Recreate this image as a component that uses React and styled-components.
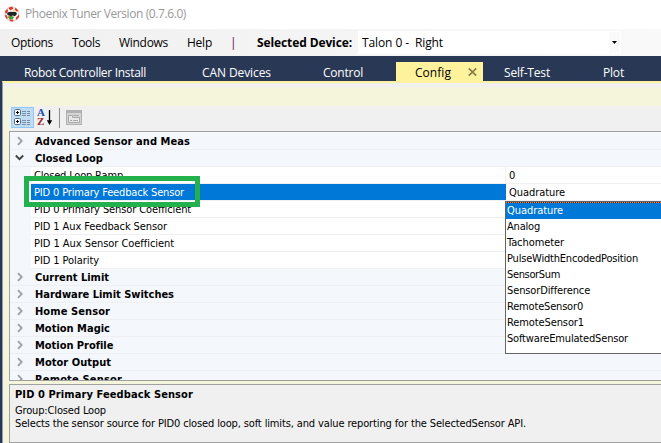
import React, { useLayoutEffect, useRef, useState } from "react";
import styled, { createGlobalStyle, css } from "styled-components";

const tahoma = '"DejaVu Sans Condensed", "DejaVu Sans", sans-serif';
const segoe = '"Open Sans", "Noto Sans", sans-serif';

const GlobalStyle = createGlobalStyle`
  * { box-sizing: border-box; }
  body { margin: 0; overflow: hidden; background: #fff; }
`;

const Text = styled.span`
  flex: none;
  white-space: pre;
  width: max-content;
`;

/* Label whose tracking is tuned so the text spans the requested width. */
function Label({ w, children }) {
  const ref = useRef(null);
  const [tracking, setTracking] = useState(0);
  useLayoutEffect(() => {
    const range = document.createRange();
    range.selectNodeContents(ref.current);
    setTracking((w - range.getBoundingClientRect().width) / children.length);
  }, [w, children]);
  return <Text ref={ref} style={{ letterSpacing: `${tracking}px` }}>{children}</Text>;
}

const Window = styled.div`
  width: 661px;
  height: 443px;
  display: flex;
  flex-direction: column;
  overflow: hidden;
  background: #293955;
  font-family: ${segoe};
  font-size: 12px;
  color: #000;
`;

const TitleBar = styled.header`
  height: 29px;
  flex: none;
  display: flex;
  align-items: center;
  gap: 5px;
  padding: 0 0 2px 4px;
  background: #fff;
  color: #999;
`;

const MenuBar = styled.nav`
  height: 27px;
  flex: none;
  display: flex;
  align-items: center;
  padding-left: 11px;
  background: linear-gradient(90deg, #f0f0f0, #f9f9f9);
`;

const MenuItem = styled.div`
  width: ${(p) => p.$span}px;
  flex: none;
  display: flex;
  font-weight: ${(p) => (p.$bold ? 700 : 400)};
  color: ${(p) => p.$tint || "#000"};
`;

const DeviceSelect = styled.div`
  width: 263px;
  height: 23px;
  display: flex;
  align-items: center;
  justify-content: space-between;
  padding: 0 1px 0 4px;
  background: #fff;
`;

const SelectArrow = styled.div`
  width: 11px;
  height: 21px;
  display: flex;
  align-items: center;
  justify-content: center;
  background: #fafafa;
`;

const TabStrip = styled.div`
  height: 25px;
  flex: none;
  display: flex;
  align-items: flex-end;
`;

const Tab = styled.div`
  width: ${(p) => p.$span}px;
  height: 19px;
  flex: none;
  display: flex;
  align-items: center;
  padding: 1px 0 0 ${(p) => p.$inset}px;
  color: #fff;
  ${(p) =>
    p.$active &&
    css`
      background: #fff29d;
      color: #000;
    `}
`;

const CloseMark = styled.svg`
  margin-left: 17px;
`;

const Page = styled.main`
  flex: 1;
  min-height: 0;
  display: flex;
  flex-direction: column;
  margin-left: 2px;
  border-top: 2px solid #fff29d;
  border-left: 1px solid #8e9bbc;
  background: #f5f5dc;
`;

const PageTop = styled.div`
  height: 4px;
  flex: none;
  background: #f0f0f0;
`;

const Editor = styled.div`
  margin: 19px 0 0 6px;
  flex: 1;
  min-height: 0;
  display: flex;
  flex-direction: column;
  font-family: ${tahoma};
  font-stretch: condensed;
  font-size: 11px;
`;

const ToolBar = styled.div`
  height: 25px;
  flex: none;
  display: flex;
  align-items: flex-start;
  padding: 1px 0 0 2px;
  background: #f0f0f0;
`;

const ToolButton = styled.div`
  width: 23px;
  height: 21px;
  display: flex;
  align-items: center;
  justify-content: center;
  border: 1px solid ${(p) => (p.$on ? "#90c8f6" : "transparent")};
  background: ${(p) => (p.$on ? "#c0dcf3" : "transparent")};
`;

const Divider = styled.div`
  width: 1px;
  height: 20px;
  margin: 1px 2px 0 4px;
  background: #8d8d8d;
`;

const Grid = styled.section`
  position: relative;
  height: 250px;
  flex: none;
  padding-top: 1px;
  border: 1px solid #a0a0a0;
  border-right: 0;
  background: #f4f7fc;
`;

const Rows = styled.div`
  height: 247px;
  overflow: hidden;
`;

const Category = styled.div`
  height: 17px;
  display: flex;
  align-items: center;
  border-bottom: 1px solid #edeff1;
  font-weight: 700;
`;

const Expander = styled.div`
  width: 25px;
  height: 16px;
  display: flex;
  align-items: center;
  padding-left: 5px;
`;

const Property = styled.div`
  height: 17px;
  display: flex;
  margin-left: 21px;
  border-bottom: 1px solid #f0f0f0;
  background: #fff;
`;

const PropertyName = styled.div`
  width: 475px;
  flex: none;
  display: flex;
  align-items: center;
  padding-left: 3px;
  border-right: 1px solid #f0f0f0;
  ${(p) =>
    p.$selected &&
    css`
      border-color: #0078d7;
      background: #0078d7;
      color: #fff;
    `}
`;

const PropertyValue = styled.div`
  display: flex;
  align-items: center;
  padding-left: 3px;
`;

const Highlight = styled.div`
  position: absolute;
  left: 14px;
  top: 44px;
  width: 176px;
  height: 31px;
  border: 5px solid #22b14c;
`;

const Options = styled.div`
  position: absolute;
  left: 495px;
  top: 69px;
  width: 170px;
  height: 153px;
  border: 1px solid #646464;
  background: #fff;
`;

const DottedEdge = styled.div`
  height: 1px;
  background: repeating-linear-gradient(90deg, #ff8728 0 1px, #40291a 1px 2px);
`;

const Option = styled.div`
  height: 16px;
  display: flex;
  align-items: center;
  padding: 0 0 2px 1px;
  background: ${(p) => (p.$selected ? "#0078d7" : "#fff")};
  color: ${(p) => (p.$selected ? "#fff" : "#000")};
`;

const HelpPane = styled.section`
  height: 59px;
  flex: none;
  margin-top: 3px;
  padding: 3px 0 0 5px;
  border: 1px solid #a0a0a0;
  border-right: 0;
  background: #f0f0f0;
  line-height: 13px;
`;

const HelpTitle = styled.div`
  display: flex;
  height: 16px;
  font-weight: 700;
`;

const HelpLine = styled.div`
  display: flex;
  height: 13px;
`;

const AppIcon = () => (
  <svg width="16" height="16" viewBox="0 0 16 16">
    <circle cx="8" cy="8" r="7" fill="#fff" stroke="#cfc6c2" strokeWidth="1" />
    <path d="M4.5 1.8 8 .5l1.5 2.2L6 4.5ZM11.5 1.8l3 3-1.6 1-2.4-2.4ZM.8 5.5 3.4 3l.8 2L2 8ZM.6 9.5 2.6 9l1.4 3-1.3 1ZM5.5 13.3l4 .4-.4 1.9-3-.3ZM11.5 12 15 8.5l.2 2.5-2.6 3Z" fill="#e5352f" />
    <path d="M3 6.8 6 5.8l6 .2 1 2-2 2.3-2.2-.8-2.2.8L3.5 9Z" fill="#222" />
    <path d="M3.8 10.6 6.6 9.8l3.6 1-1.4 2.4-3.4.2Z" fill="#4f9a35" />
    <path d="M8.8 3.5l3 2.2-3-.2Z" fill="#f2c654" />
  </svg>
);

const CategorizedIcon = () => (
  <svg width="17" height="17" viewBox="0 0 17 17" fill="none">
    {[1, 10].map((y) => (
      <g key={y}>
        <rect x=".5" y={y - 0.5} width="6" height="6" rx="1.2" fill="#fff" stroke="#4d6b8b" />
        <path d={`M2 ${y + 2.5}h3M3.5 ${y + 1}v3`} stroke="#000" />
        <path d={`M8 ${y + 1.5}h4M8 ${y + 3.5}h4M8 ${y + 5.5}h4M13 ${y + 1.5}h3M13 ${y + 3.5}h3M13 ${y + 5.5}h3`} stroke="#788ea5" />
      </g>
    ))}
  </svg>
);

const AlphaWrap = styled.div`
  width: 21px;
  height: 20px;
  display: flex;
  align-items: center;
  padding-left: 3px;
`;

const AlphaLetters = styled.div`
  width: 9px;
  font: 700 11px/9px "Liberation Serif", serif;
  color: #1b4dab;
`;

const AlphaLast = styled.div`
  color: #9c2828;
`;

const SortIcon = () => (
  <AlphaWrap>
    <AlphaLetters>
      A<AlphaLast>Z</AlphaLast>
    </AlphaLetters>
    <svg width="7" height="17" viewBox="0 0 7 17">
      <path d="M3.5 1v12" stroke="#000" strokeWidth="1.3" />
      <path d="M.8 11.3h5.4L3.5 16Z" fill="#000" />
    </svg>
  </AlphaWrap>
);

const PagesIcon = () => (
  <svg width="16" height="15" viewBox="0 0 16 15" fill="none">
    <rect x=".5" y=".5" width="15" height="14" fill="#d4d4d4" stroke="#b1b1b1" />
    <path d="M1 2h14" stroke="#b1b1b1" strokeWidth="2" />
    <path d="M2.5 12.5v-7h4v2h7v5Z" fill="#e9e9e9" stroke="#a8a8a8" />
    <path d="M7.5 5.5h5M4 10.5h2M7 10.5h5" stroke="#a8a8a8" />
  </svg>
);

const Chevron = ({ open }) => (
  <svg width="10" height="10" viewBox="0 0 10 10" fill="none">
    {open ? (
      <path d="M.8 2.5 4.5 6.2 8.2 2.5" stroke="#404040" strokeWidth="1.8" />
    ) : (
      <path d="M3 1.2 6.7 5 3 8.8" stroke="#a0a0a0" strokeWidth="1.8" />
    )}
  </svg>
);

const menu = [
  { text: "Options", w: 42, span: 61 },
  { text: "Tools", w: 28, span: 47 },
  { text: "Windows", w: 49, span: 68 },
  { text: "Help", w: 25, span: 43 },
  { text: "|", w: 4, span: 27, tint: "#561045" },
  { text: "Selected Device:", w: 95, span: 101, bold: true },
];

const tabs = [
  { text: "Robot Controller Install", w: 122, span: 174, inset: 24 },
  { text: "CAN Devices", w: 69, span: 121, inset: 28 },
  { text: "Control", w: 40, span: 101, inset: 28 },
  { text: "Config", w: 36, span: 87, inset: 19, active: true },
  { text: "Self-Test", w: 46, span: 96, inset: 21 },
  { text: "Plot", w: 21, span: 60, inset: 24 },
];

const rows = [
  { category: "Advanced Sensor and Meas", w: 155 },
  { category: "Closed Loop", w: 68, open: true },
  { name: "Closed Loop Ramp", w: 89, value: "0", vw: 6 },
  { name: "PID 0 Primary Feedback Sensor", w: 150, value: "Quadrature", vw: 56, selected: true },
  { name: "PID 0 Primary Sensor Coefficient", w: 157 },
  { name: "PID 1 Aux Feedback Sensor", w: 133 },
  { name: "PID 1 Aux Sensor Coefficient", w: 140 },
  { name: "PID 1 Polarity", w: 65 },
  { category: "Current Limit", w: 74 },
  { category: "Hardware Limit Switches", w: 139 },
  { category: "Home Sensor", w: 75 },
  { category: "Motion Magic", w: 75 },
  { category: "Motion Profile", w: 78 },
  { category: "Motor Output", w: 76 },
  { category: "Remote Sensor", w: 87 },
];

const options = [
  ["Quadrature", 56],
  ["Analog", 33],
  ["Tachometer", 57],
  ["PulseWidthEncodedPosition", 131],
  ["SensorSum", 53],
  ["SensorDifference", 83],
  ["RemoteSensor0", 76],
  ["RemoteSensor1", 77],
  ["SoftwareEmulatedSensor", 121],
];

export default function App() {
  return (
    <Window>
      <GlobalStyle />
      <TitleBar>
        <AppIcon />
        <Label w={161}>Phoenix Tuner Version (0.7.6.0)</Label>
      </TitleBar>
      <MenuBar>
        {menu.map((m) => (
          <MenuItem key={m.text} $span={m.span} $bold={m.bold} $tint={m.tint}>
            <Label w={m.w}>{m.text}</Label>
          </MenuItem>
        ))}
        <DeviceSelect>
          <Label w={81}>{"Talon 0 -  Right"}</Label>
          <SelectArrow>
            <svg width="5" height="3" viewBox="0 0 5 3">
              <path d="M0 0h5L2.5 3Z" />
            </svg>
          </SelectArrow>
        </DeviceSelect>
      </MenuBar>
      <TabStrip>
        {tabs.map((t) => (
          <Tab key={t.text} $span={t.span} $inset={t.inset} $active={t.active}>
            <Label w={t.w}>{t.text}</Label>
            {t.active && (
              <CloseMark width="9" height="8" viewBox="0 0 9 8">
                <path d="M.8.4 8.2 7.6M8.2.4.8 7.6" stroke="#857b50" strokeWidth="1.7" />
              </CloseMark>
            )}
          </Tab>
        ))}
      </TabStrip>
      <Page>
        <PageTop />
        <Editor>
          <ToolBar>
            <ToolButton $on>
              <CategorizedIcon />
            </ToolButton>
            <SortIcon />
            <Divider />
            <ToolButton>
              <PagesIcon />
            </ToolButton>
          </ToolBar>
          <Grid>
            <Rows>
              {rows.map((r) =>
                r.category ? (
                  <Category key={r.category}>
                    <Expander>
                      <Chevron open={r.open} />
                    </Expander>
                    <Label w={r.w}>{r.category}</Label>
                  </Category>
                ) : (
                  <Property key={r.name}>
                    <PropertyName $selected={r.selected}>
                      <Label w={r.w}>{r.name}</Label>
                    </PropertyName>
                    <PropertyValue>{r.value && <Label w={r.vw}>{r.value}</Label>}</PropertyValue>
                  </Property>
                )
              )}
            </Rows>
            <Highlight />
            <Options>
              <DottedEdge />
              {options.map(([text, w], i) => (
                <Option key={text} $selected={i === 0}>
                  <Label w={w}>{text}</Label>
                </Option>
              ))}
            </Options>
          </Grid>
          <HelpPane>
            <HelpTitle>
              <Label w={178}>PID 0 Primary Feedback Sensor</Label>
            </HelpTitle>
            <HelpLine>
              <Label w={91}>Group:Closed Loop</Label>
            </HelpLine>
            <HelpLine>
              <Label w={511}>
                {"Selects the sensor source for PID0 closed loop, soft limits, and value reporting for the SelectedSensor API."}
              </Label>
            </HelpLine>
          </HelpPane>
        </Editor>
      </Page>
    </Window>
  );
}
